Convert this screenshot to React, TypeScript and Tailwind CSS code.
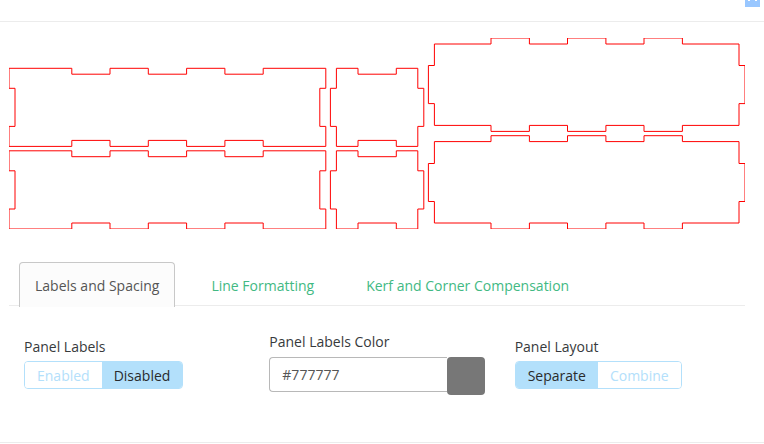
import { useState } from 'react';

const panels = [
  // long sides
  'M0 30.3H62.8V36.2H101V30.3H139.3V36.2H177.6V30.3H215.9V36.2H254.2V30.3H316.8V50.3H310.8V88.4H316.8V108.4H254.2V102.4H215.9V108.4H177.6V102.4H139.3V108.4H101V102.4H62.8V108.4H0V88.4H6V50.3H0Z',
  'M0 112.8H62.8V118.7H101V112.8H139.3V118.7H177.6V112.8H215.9V118.7H254.2V112.8H316.8V132.8H310.8V171H316.8V191H254.2V185H215.9V191H177.6V185H139.3V191H101V185H62.8V191H0V171H6V132.8H0Z',
  // short ends
  'M327.4 30.3H349V36.2H387.3V30.3H408.8V50.3H414.8V88.4H408.8V108.4H387.3V102.4H349V108.4H327.4V88.4H321.4V50.3H327.4Z',
  'M327.4 112.8H349V118.7H387.3V112.8H408.8V132.8H414.8V171H408.8V191H387.3V185H349V191H327.4V171H321.4V132.8H327.4Z',
  // top and bottom
  'M425.4 6H482V0H520.4V6H558.5V0H596.9V6H635V0H673.4V6H730V27.5H736V65.6H730V87.4H673.4V93.4H635V87.4H596.9V93.4H558.5V87.4H520.4V93.4H482V87.4H425.4V65.6H419.4V27.5H425.4Z',
  'M425.4 103.6H482V97.7H520.4V103.6H558.5V97.7H596.9V103.6H635V97.7H673.4V103.6H730V125.5H736V163.5H730V185H673.4V191H635V185H596.9V191H558.5V185H520.4V191H482V185H425.4V163.5H419.4V125.5H425.4Z',
];

const tabs = ['Labels and Spacing', 'Line Formatting', 'Kerf and Corner Compensation'];

type ToggleProps = { id: string; label: string; options: string[]; initial: string };

function Toggle({ id, label, options, initial }: ToggleProps) {
  const [value, setValue] = useState(initial);
  return (
    <div className="flex flex-col items-start px-[15px] pt-[5px]">
      <span id={id} className="leading-5">{label}</span>
      <div role="group" aria-labelledby={id} className="mt-1 flex h-7 overflow-hidden rounded border border-[#b3e0fb]">
        {options.map((option) => (
          <button
            key={option}
            type="button"
            aria-pressed={value === option}
            onClick={() => setValue(option)}
            className={
              value === option
                ? 'bg-[#b3e0fb] px-3 text-[#292b2c]'
                : 'bg-white px-3 font-medium text-[#b3e0fb]'
            }
          >
            {option}
          </button>
        ))}
      </div>
    </div>
  );
}

export default function App() {
  const [tab, setTab] = useState(tabs[0]);
  const [color, setColor] = useState('#777777');
  return (
    <div className="bg-white font-['Open_Sans','Noto_Sans',sans-serif] text-[14px] text-[#373a3c]">
      <header className="flex h-[22px] items-start justify-end border-b border-[#ececec] pr-1">
        <svg width="15" height="7" viewBox="0 0 15 7" aria-hidden="true">
          <path d="M0 0H15V7H0Z" fill="#99c7ff" />
          <path d="M3 0H5V1H3ZM10 0H12V1H10Z" fill="#fff" />
        </svg>
      </header>

      <main className="border-b border-[#ececec] pt-4 pr-[19px] pb-[47px] pl-[9px]">
        <svg viewBox="0 0 736 191" className="block w-full overflow-hidden" role="img" aria-label="Box panels">
          {panels.map((d) => (
            <path key={d} d={d} fill="none" stroke="#ff0000" strokeWidth="1" />
          ))}
        </svg>

        <div role="tablist" className="mt-[33px] flex h-11 gap-5 border-b border-[#ececec] pl-[10px]">
          {tabs.map((name) => (
            <button
              key={name}
              type="button"
              role="tab"
              aria-selected={tab === name}
              onClick={() => setTab(name)}
              className={
                tab === name
                  ? 'h-[45px] rounded-t border border-b-0 border-[#c8c8c8] bg-[#fcfcfc] px-[15px] text-[#555]'
                  : 'h-[45px] border border-b-0 border-transparent px-[15px] text-[#42b983]'
              }
            >
              {name}
            </button>
          ))}
        </div>

        <div className="mt-[26px] grid grid-cols-3">
          <Toggle id="panel-labels" label="Panel Labels" options={['Enabled', 'Disabled']} initial="Disabled" />
          <div className="px-[15px]">
            <label htmlFor="label-color" className="block leading-5">Panel Labels Color</label>
            <div className="mt-[5px] flex">
              <input
                id="label-color"
                type="text"
                value={color}
                onChange={(e) => setColor(e.target.value)}
                className="h-[35px] min-w-0 flex-1 rounded-l border border-r-0 border-[#b8b8b8] bg-white px-3 text-[#555] outline-none"
              />
              <button
                type="button"
                aria-label="Pick a color"
                style={{ backgroundColor: color }}
                className="h-[38px] w-[38px] rounded"
              />
            </div>
          </div>
          <Toggle id="panel-layout" label="Panel Layout" options={['Separate', 'Combine']} initial="Separate" />
        </div>
      </main>
    </div>
  );
}
